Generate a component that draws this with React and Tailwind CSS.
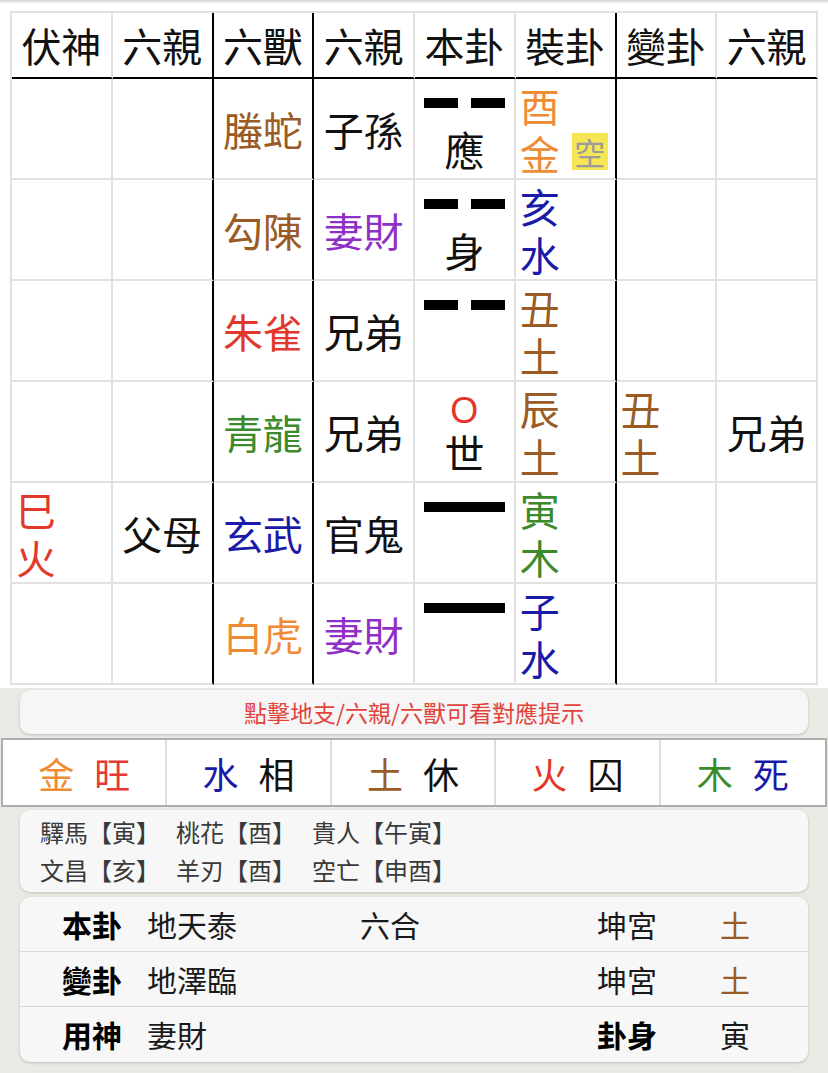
const BROWN = "text-[#9a5b25]";
const ORANGE = "text-[#ef8b35]";
const RED = "text-[#e2382c]";
const GREEN = "text-[#3b8a2b]";
const BLUE = "text-[#1a1aa8]";
const PURPLE = "text-[#8e2fc6]";
const BLACK = "text-[#111]";

const headers = ["伏神", "六親", "六獸", "六親", "本卦", "裝卦", "變卦", "六親"];

const rows = [
  { beast: ["螣蛇", BROWN], rel: ["子孫", BLACK], yao: "yin", mark: "應", zhi: ["酉", "金", ORANGE], kong: true },
  { beast: ["勾陳", BROWN], rel: ["妻財", PURPLE], yao: "yin", mark: "身", zhi: ["亥", "水", BLUE] },
  { beast: ["朱雀", RED], rel: ["兄弟", BLACK], yao: "yin", mark: "", zhi: ["丑", "土", BROWN] },
  {
    beast: ["青龍", GREEN], rel: ["兄弟", BLACK], yao: "moving", mark: "世", zhi: ["辰", "土", BROWN],
    bian: ["丑", "土", BROWN], bianRel: "兄弟",
  },
  {
    fu: ["巳", "火", RED], fuRel: "父母",
    beast: ["玄武", BLUE], rel: ["官鬼", BLACK], yao: "yang", mark: "", zhi: ["寅", "木", GREEN],
  },
  { beast: ["白虎", ORANGE], rel: ["妻財", PURPLE], yao: "yang", mark: "", zhi: ["子", "水", BLUE] },
];

// columns 1, 2 and 5 carry the heavy black divider on their right
const rightLine = (i) =>
  i === 1 || i === 2 || i === 5 ? "border-r-black" : "border-r-[#e1e1e1]";

const Stack = ({ data, children }) => (
  <div className={`h-full pl-[4px] pt-[2px] leading-[48px] ${data[2]}`}>
    <div>{data[0]}</div>
    <div className="flex items-end">
      <span>{data[1]}</span>
      {children}
    </div>
  </div>
);

const Yao = ({ type, mark }) => (
  <div className="h-full flex flex-col items-center">
    <div className="h-[48px] flex items-center justify-center">
      {type === "yin" && (
        <div className="flex gap-[13px]">
          <div className="w-[34px] h-[10px] bg-black" />
          <div className="w-[34px] h-[10px] bg-black" />
        </div>
      )}
      {type === "yang" && <div className="w-[81px] h-[10px] bg-black" />}
      {type === "moving" && (
        <span
          className={`mt-[10px] text-[36px] leading-[30px] ${RED}`}
          style={{ fontFamily: '"Liberation Sans", sans-serif' }}
        >
          O
        </span>
      )}
    </div>
    <div className="leading-[44px]">{mark}</div>
  </div>
);

const Cell = ({ col, header, center, children }) => (
  <div
    className={`border-r-2 border-b-2 ${rightLine(col)} ${
      header ? "h-[66px] border-b-black" : "h-[101px] border-b-[#e1e1e1]"
    } ${center ? "flex items-center justify-center" : ""}`}
  >
    {children}
  </div>
);

const wuxing = [
  ["金", ORANGE, "旺", "text-[#e53935]"],
  ["水", BLUE, "相", BLACK],
  ["土", BROWN, "休", BLACK],
  ["火", RED, "囚", BLACK],
  ["木", GREEN, "死", BLUE],
];

const shensha = [
  ["驛馬【寅】", "桃花【酉】", "貴人【午寅】"],
  ["文昌【亥】", "羊刃【酉】", "空亡【申酉】"],
];

const App = () => {
  return (
    <div
      className="min-h-screen bg-[#ebe9e4] pb-[11px]"
      style={{ fontFamily: '"Noto Sans CJK TC", "Noto Sans CJK SC", sans-serif' }}
    >
      <div className="bg-white pb-[3px]">
        <div className="h-[4px] bg-gradient-to-b from-[#d4d4d4] to-white" />
        <div className="mt-[7px] ml-[10px] w-[808px] border-l-2 border-t-2 border-[#e1e1e1] grid grid-cols-8 text-[40px] text-[#111]">
          {headers.map((h, i) => (
            <Cell key={"h" + i} col={i} header center>
              <span className="leading-none">{h}</span>
            </Cell>
          ))}
          {rows.map((r, ri) => (
            <div key={ri} className="contents">
              <Cell col={0}>{r.fu && <Stack data={r.fu} />}</Cell>
              <Cell col={1} center>{r.fuRel && <span>{r.fuRel}</span>}</Cell>
              <Cell col={2} center>
                <span className={r.beast[1]}>{r.beast[0]}</span>
              </Cell>
              <Cell col={3} center>
                <span className={r.rel[1]}>{r.rel[0]}</span>
              </Cell>
              <Cell col={4}>
                <Yao type={r.yao} mark={r.mark} />
              </Cell>
              <Cell col={5}>
                <Stack data={r.zhi}>
                  {r.kong && (
                    <span className="ml-[12px] mb-[7px] w-[36px] h-[37px] flex items-center justify-center bg-[#f7e654] text-[#9a9a9a] text-[31px] leading-none">
                      空
                    </span>
                  )}
                </Stack>
              </Cell>
              <Cell col={6}>{r.bian && <Stack data={r.bian} />}</Cell>
              <Cell col={7} center>{r.bianRel && <span>{r.bianRel}</span>}</Cell>
            </div>
          ))}
        </div>
      </div>

      <div className="mt-[2px] mx-[20px] h-[44px] rounded-[10px] bg-[#f6f6f6] shadow-[0_1px_3px_rgba(0,0,0,0.18)] flex items-center justify-center text-[23px] text-[#e0443c]">
        點擊地支/六親/六獸可看對應提示
      </div>

      <div className="mt-[4px] mx-[1px] h-[69px] border-2 border-[#aeaeae] bg-white grid grid-cols-5 text-[36px]">
        {wuxing.map((w, i) => (
          <div
            key={i}
            className={`flex items-center justify-center gap-[20px] ${
              i < 4 ? "border-r-2 border-[#dedede]" : ""
            }`}
          >
            <span className={w[1]}>{w[0]}</span>
            <span className={w[3]}>{w[2]}</span>
          </div>
        ))}
      </div>

      <div className="mt-[3px] mx-[20px] h-[82px] rounded-[10px] bg-[#f7f7f7] shadow-[0_1px_3px_rgba(0,0,0,0.18)] px-[20px] pt-[3px] text-[24px] leading-[38px] text-[#3a3a3a]">
        {shensha.map((line, i) => (
          <div key={i} className="flex gap-[16px]">
            {line.map((s) => (
              <span key={s}>{s}</span>
            ))}
          </div>
        ))}
      </div>

      <div className="mt-[5px] mx-[20px] rounded-[10px] bg-[#f7f7f7] shadow-[0_1px_3px_rgba(0,0,0,0.18)] text-[30px] text-[#1a1a1a]">
        <div className="h-[55px] grid grid-cols-[85px_213px_237px_123px_1fr] items-center pl-[42px] border-b border-[#d9d9d9]">
          <span className="font-bold text-black">本卦</span>
          <span>地天泰</span>
          <span>六合</span>
          <span>坤宮</span>
          <span className={BROWN}>土</span>
        </div>
        <div className="h-[55px] grid grid-cols-[85px_213px_237px_123px_1fr] items-center pl-[42px] border-b border-[#d9d9d9]">
          <span className="font-bold text-black">變卦</span>
          <span>地澤臨</span>
          <span></span>
          <span>坤宮</span>
          <span className={BROWN}>土</span>
        </div>
        <div className="h-[55px] grid grid-cols-[85px_213px_237px_123px_1fr] items-center pl-[42px]">
          <span className="font-bold text-black">用神</span>
          <span>妻財</span>
          <span></span>
          <span className="font-bold text-black">卦身</span>
          <span>寅</span>
        </div>
      </div>
    </div>
  );
};

export default App;
